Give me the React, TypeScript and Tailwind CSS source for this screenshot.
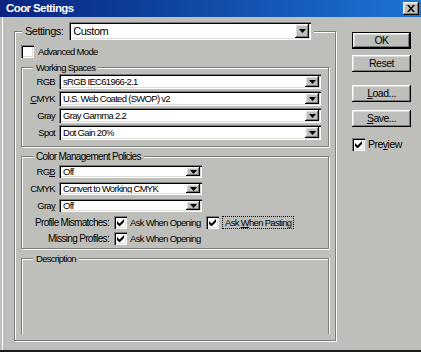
import React from "react"

const FONT = "font-['Liberation_Sans',Arial,sans-serif]"
const RAISED =
  "bg-[#bebfbb] shadow-[inset_-1px_-1px_0_#000,inset_1px_1px_0_#fff,inset_-2px_-2px_0_#7b7d7b,inset_2px_2px_0_#dcdcd8]"
const SUNKEN =
  "bg-white shadow-[inset_1px_1px_0_#7b7d7b,inset_2px_2px_0_#000,inset_-1px_-1px_0_#fff,inset_-2px_-2px_0_#dcdcd8]"
const ETCHED = "border border-[#7b7d7b] shadow-[inset_1px_1px_0_#fff,1px_1px_0_#fff]"

function Arrow() {
  return (
    <svg width="7" height="4" viewBox="0 0 7 4">
      <path d="M0 0h7L3.5 4z" fill="#000" />
    </svg>
  )
}

function Combo({ value, className }: { value: string; className: string }) {
  return (
    <div className={`flex items-stretch p-[2px] ${SUNKEN} ${className}`}>
      <span className="flex-1 pl-[2px] flex items-center overflow-hidden whitespace-nowrap">{value}</span>
      <span className={`w-[14px] flex items-center justify-center ${RAISED}`}>
        <Arrow />
      </span>
    </div>
  )
}

function Check({ checked }: { checked?: boolean }) {
  return (
    <span className={`w-[13px] h-[13px] shrink-0 flex items-center justify-center ${SUNKEN}`}>
      {checked && (
        <svg width="7" height="7" viewBox="0 0 7 7">
          <path d="M0 2v3l2 2h1l4-4V0L2.5 4.5z" fill="#000" />
        </svg>
      )}
    </span>
  )
}

function Button({ children, primary }: { children: React.ReactNode; primary?: boolean }) {
  return (
    <div
      className={`h-[17px] w-[59px] flex items-center justify-center text-[10.5px] tracking-[-0.5px] ${
        primary ? "border border-black" : ""
      } ${RAISED}`}
    >
      {children}
    </div>
  )
}

function Row({ label, children }: { label: React.ReactNode; children: React.ReactNode }) {
  return (
    <div className="flex items-center">
      <span className="w-[33px] text-right">{label}</span>
      <div className="ml-[4px]">{children}</div>
    </div>
  )
}

export default function App() {
  return (
    <div
      className={`w-[421px] h-[352px] bg-[#bebfbb] flex flex-col overflow-hidden border-b-2 border-[#1a1a1a] shadow-[inset_2px_0_0_#bebfbb,inset_3px_0_0_#fff] text-black text-[9.5px] leading-[13px] tracking-[-0.7px] whitespace-nowrap ${FONT}`}
    >
      <div className="h-[17px] shrink-0 flex items-center justify-between pl-[6px] pr-[2px] bg-linear-to-r from-[#0a2480] to-[#1f74d4]">
        <span className="text-white font-bold text-[11.5px] tracking-[-0.6px]">Coor Settings</span>
        <span className={`w-[16px] h-[13px] flex items-center justify-center ${RAISED}`}>
          <svg width="8" height="7" viewBox="0 0 8 7">
            <path d="M0 0h2l2 2.5L6 0h2L5 3.5 8 7H6L4 4.5 2 7H0l3-3.5z" fill="#000" />
          </svg>
        </span>
      </div>

      <div className="flex flex-1">
        <fieldset className={`ml-[14px] mt-[5px] w-[322px] h-[319px] ${ETCHED}`}>
          <legend className="ml-[7px] px-[3px] bg-[#bebfbb] flex items-center h-[18px] text-[11px] tracking-[-0.5px]">
            <span className="mr-[6px]">Settings:</span>
            <Combo value="Custom" className="w-[242px] h-[18px]" />
          </legend>

          <div className="px-[6px] pt-[5px] flex flex-col">
            <div className="flex items-center h-[13px]">
              <Check />
              <span className="ml-[4px]">Advanced Mode</span>
            </div>

            <fieldset className={`mt-[3px] ${ETCHED}`}>
              <legend className="ml-[11px] px-[3px] bg-[#bebfbb] h-[13px]">Working Spaces</legend>
              <div className="flex flex-col gap-[2px] pb-[6px]">
                <Row label="RGB">
                  <Combo value="sRGB IEC61966-2.1" className="w-[262px] h-[15px]" />
                </Row>
                <Row label={<><span className="underline">C</span>MYK</>}>
                  <Combo value="U.S. Web Coated (SWOP) v2" className="w-[262px] h-[15px]" />
                </Row>
                <Row label="Gray">
                  <Combo value="Gray Gamma 2.2" className="w-[262px] h-[15px]" />
                </Row>
                <Row label="Spot">
                  <Combo value="Dot Gain 20%" className="w-[262px] h-[15px]" />
                </Row>
              </div>
            </fieldset>

            <fieldset className={`mt-[3px] ${ETCHED}`}>
              <legend className="ml-[11px] px-[3px] bg-[#bebfbb] h-[13px] text-[10px]">Color Management Policies</legend>
              <div className="flex flex-col pt-[2px] pb-[3px]">
                <div className="flex flex-col gap-[4px]">
                  <Row label={<>RG<span className="underline">B</span></>}>
                    <Combo value="Off" className="w-[143px] h-[13px]" />
                  </Row>
                  <Row label="CMYK">
                    <Combo value="Convert to Working CMYK" className="w-[143px] h-[13px]" />
                  </Row>
                  <Row label={<>Gra<span className="underline">y</span></>}>
                    <Combo value="Off" className="w-[143px] h-[13px]" />
                  </Row>
                </div>
                <div className="flex items-center h-[13px] mt-[4px]">
                  <span className="w-[87px] text-right text-[10px]">Profile Mismatches:</span>
                  <span className="ml-[5px]"><Check checked /></span>
                  <span className="ml-[2px] w-[77px] pl-[1px]">Ask When Opening</span>
                  <Check checked />
                  <span className="ml-[3px] px-[2px] border border-dotted border-black leading-[11px]">
                    Ask <span className="underline">W</span>hen Pasting
                  </span>
                </div>
                <div className="flex items-center h-[13px] mt-[3px]">
                  <span className="w-[87px] text-right text-[10px]">Missing Profiles:</span>
                  <span className="ml-[5px]"><Check checked /></span>
                  <span className="ml-[2px] pl-[1px]">Ask When Opening</span>
                </div>
              </div>
            </fieldset>

            <fieldset className="mt-[3px] h-[82px] border border-b-0 border-[#7b7d7b] shadow-[inset_1px_1px_0_#fff,1px_0_0_#fff]">
              <legend className="ml-[11px] px-[3px] bg-[#bebfbb] h-[13px]">Description</legend>
            </fieldset>
          </div>
        </fieldset>

        <div className="ml-[16px] mt-[15px] flex flex-col w-[59px]">
          <Button primary>OK</Button>
          <div className="mt-[6px]">
            <Button>Reset</Button>
          </div>
          <div className="mt-[13px]">
            <Button>
              <span className="underline">L</span>oad...
            </Button>
          </div>
          <div className="mt-[8px]">
            <Button>
              <span className="underline">S</span>ave...
            </Button>
          </div>
          <div className="mt-[11px] flex items-center text-[10.5px] tracking-[-0.5px]">
            <Check checked />
            <span className="ml-[3px]">
              Pre<span className="underline">v</span>iew
            </span>
          </div>
        </div>
      </div>
    </div>
  )
}
